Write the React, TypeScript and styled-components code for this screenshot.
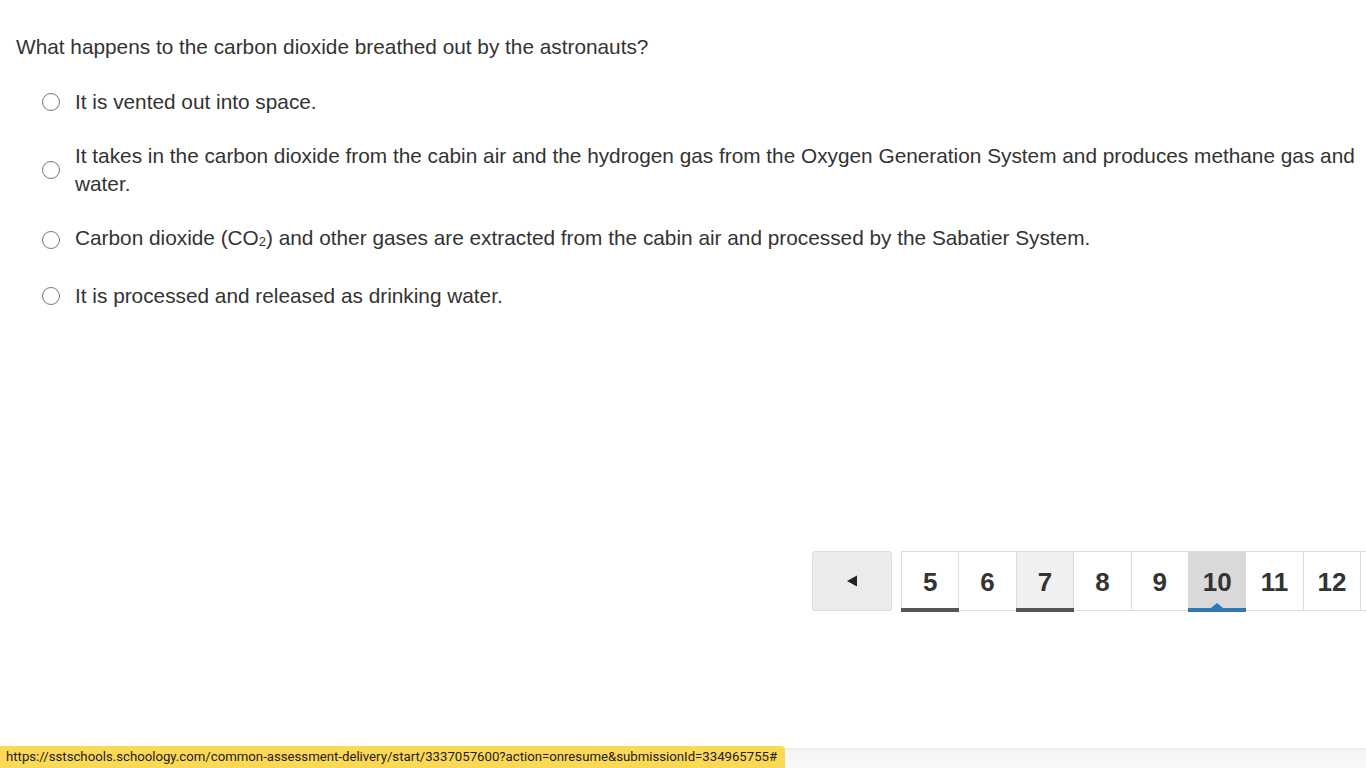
import { FC } from "react";
import styled, { createGlobalStyle } from "styled-components";

const Global = createGlobalStyle`
  html, body {
    margin: 0;
    padding: 0;
    background: #fff;
    overflow: hidden;
  }
  body {
    font-family: "Liberation Sans", Arial, sans-serif;
    color: #333;
  }
`;

const Page = styled.div`
  width: 1366px;
  height: 768px;
  display: flex;
  flex-direction: column;
  position: relative;
  overflow: hidden;
`;

const Main = styled.div`
  flex: 1;
  padding: 33px 0 0 16px;
  min-width: 0;
`;

const Question = styled.div`
  font-size: 20.8px;
  line-height: 28px;
  color: #333;
`;

const Options = styled.div`
  margin-top: 14px;
  display: flex;
  flex-direction: column;
`;

const Option = styled.label`
  display: flex;
  align-items: center;
  padding: 13px 0 13px 26px;
  font-size: 20.8px;
  line-height: 28px;
  color: #333;
  cursor: pointer;
`;

const Radio = styled.span`
  flex: none;
  width: 16px;
  height: 16px;
  border: 1.5px solid #777;
  border-radius: 50%;
  margin-right: 15px;
  background: #fff;
`;

const Sub = styled.sub`
  font-size: 13px;
  vertical-align: -1px;
  line-height: 26.6px;
`;

const NavRow = styled.div`
  display: flex;
  align-items: flex-start;
  margin-top: 228px;
  margin-left: 796px;
  gap: 9px;
`;

const PrevButton = styled.button`
  flex: none;
  width: 80px;
  height: 60px;
  box-sizing: border-box;
  background: #ebebeb;
  border: 1px solid #dcdcdc;
  border-radius: 3px;
  display: flex;
  align-items: center;
  justify-content: center;
  padding: 0;
`;

const Pages = styled.div`
  display: flex;
  flex: none;
  border-top: 1px solid #dcdcdc;
  border-bottom: 1px solid #dcdcdc;
  border-left: 1px solid #dcdcdc;
  height: 60px;
  box-sizing: border-box;
`;

const PageItem = styled.div<{ $bg?: string; $bar?: string; $active?: boolean }>`
  position: relative;
  flex: none;
  width: 57.4px;
  height: 58px;
  border-right: 1px solid #dcdcdc;
  background: ${(p) => p.$bg || "#fff"};
  display: flex;
  align-items: center;
  justify-content: center;
  font-size: 26px;
  font-weight: 700;
  color: #333;
  padding-top: 4px;
  box-sizing: border-box;

  ${(p) =>
    p.$bar &&
    `&::after {
      content: "";
      position: absolute;
      left: -1px;
      right: -1px;
      bottom: -2px;
      height: 4px;
      background: ${p.$bar};
    }`}

  ${(p) =>
    p.$active &&
    `&::before {
      content: "";
      position: absolute;
      left: 50%;
      bottom: 2px;
      margin-left: -6px;
      border-left: 6px solid transparent;
      border-right: 6px solid transparent;
      border-bottom: 5px solid #2f78b4;
    }`}
`;

const Footer = styled.div`
  height: 20px;
  background: linear-gradient(#ededed, #f7f7f7 6px, #f8f8f8);
`;

const StatusBubble = styled.div`
  position: absolute;
  left: 0;
  bottom: 0;
  height: 22px;
  padding: 0 8px 0 6px;
  background: #fcd955;
  border-top-right-radius: 4px;
  font-family: "Roboto", "Liberation Sans", sans-serif;
  font-size: 13.2px;
  line-height: 22px;
  color: #222;
  white-space: nowrap;
`;

const pages: { n: number; bg?: string; bar?: string; active?: boolean }[] = [
  { n: 5, bar: "#555" },
  { n: 6 },
  { n: 7, bg: "#f0f0f0", bar: "#555" },
  { n: 8 },
  { n: 9 },
  { n: 10, bg: "#d9d9d9", bar: "#2f78b4", active: true },
  { n: 11 },
  { n: 12 },
  { n: 13 },
];

const App: FC = () => {
  return (
    <Page>
      <Global />
      <Main>
        <Question>What happens to the carbon dioxide breathed out by the astronauts?</Question>
        <Options>
          <Option>
            <Radio />
            <span>It is vented out into space.</span>
          </Option>
          <Option>
            <Radio />
            <span>
              It takes in the carbon dioxide from the cabin air and the hydrogen gas from the Oxygen
              Generation System and produces methane gas and water.
            </span>
          </Option>
          <Option>
            <Radio />
            <span>
              Carbon dioxide (CO<Sub>2</Sub>) and other gases are extracted from the cabin air and
              processed by the Sabatier System.
            </span>
          </Option>
          <Option>
            <Radio />
            <span>It is processed and released as drinking water.</span>
          </Option>
        </Options>
        <NavRow>
          <PrevButton aria-label="Previous">
            <svg width="12" height="12" viewBox="0 0 12 12">
              <path d="M1 6 L11 0.5 L11 11.5 Z" fill="#222" />
            </svg>
          </PrevButton>
          <Pages>
            {pages.map((p) => (
              <PageItem key={p.n} $bg={p.bg} $bar={p.bar} $active={p.active}>
                {p.n}
              </PageItem>
            ))}
          </Pages>
        </NavRow>
      </Main>
      <Footer />
      <StatusBubble>
        https://sstschools.schoology.com/common-assessment-delivery/start/3337057600?action=onresume&amp;submissionId=334965755#
      </StatusBubble>
    </Page>
  );
};

export default App;
